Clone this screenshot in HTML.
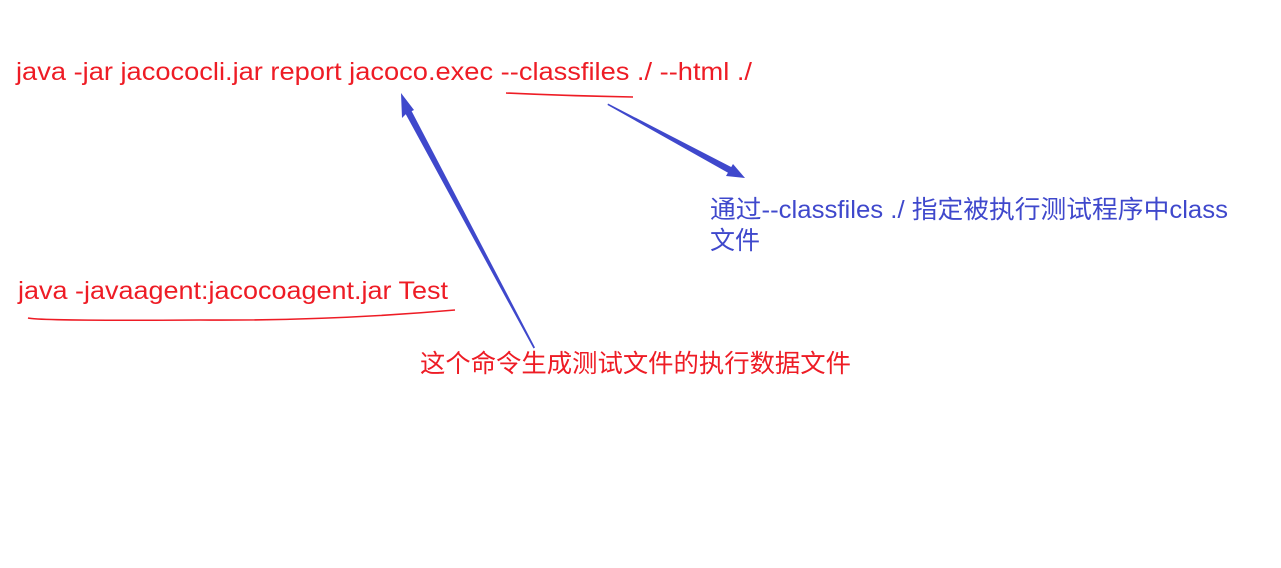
<!DOCTYPE html>
<html><head><meta charset="utf-8"><style>html,body{margin:0;padding:0;background:#fff;width:1281px;height:568px;overflow:hidden}</style></head>
<body>
<svg width="1281" height="568" viewBox="0 0 1281 568" xmlns="http://www.w3.org/2000/svg" style="display:block">
<g font-family="Liberation Sans, Noto Sans CJK SC, sans-serif" font-size="25">
<text x="16" y="80" fill="#ee1c25" textLength="736" lengthAdjust="spacingAndGlyphs">java -jar jacococli.jar report jacoco.exec --classfiles ./ --html ./</text>
<text x="18" y="299" fill="#ee1c25" textLength="430" lengthAdjust="spacingAndGlyphs">java -javaagent:jacocoagent.jar Test</text>
<text x="710" y="218" fill="#3f48cc" textLength="518" lengthAdjust="spacingAndGlyphs">通过--classfiles ./ 指定被执行测试程序中class</text>
<text x="710" y="249" fill="#3f48cc">文件</text>
<text x="420" y="372" fill="#ee1c25" textLength="431" lengthAdjust="spacingAndGlyphs">这个命令生成测试文件的执行数据文件</text>
</g>
<path d="M506 93 Q570 96 633 97" stroke="#ee1c25" stroke-width="1.6" fill="none"/>
<path d="M28 318 Q40 321 200 320 Q330 321 455 310" stroke="#ee1c25" stroke-width="1.6" fill="none"/>
<path d="M533.5 348.5 L535 347.5 L410 108 L404 111 Z" fill="#3f48cc"/>
<path d="M401 93 L414 110 L406 114 L402 118 Z" fill="#3f48cc"/>
<path d="M608 103.5 L607.5 105 L732 175 L735 169 Z" fill="#3f48cc"/>
<path d="M745 178 L726 176 L733 164 Z" fill="#3f48cc"/>
</svg>
</body></html>
